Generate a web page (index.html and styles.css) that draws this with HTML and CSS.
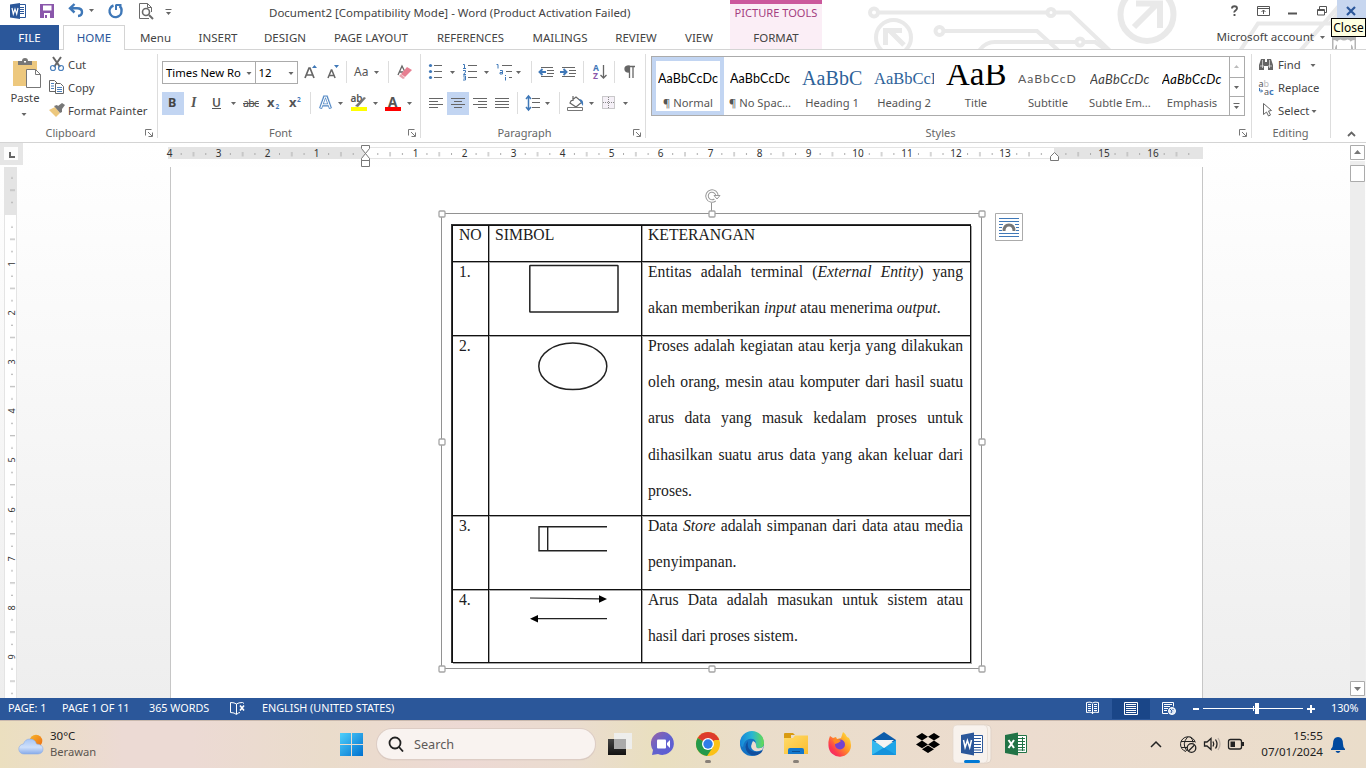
FILE: index.html
```html
<!DOCTYPE html>
<html lang="en">
<head>
<meta charset="utf-8">
<title>Document2 [Compatibility Mode] - Word</title>
<link rel="stylesheet" href="styles.css">
</head>
<body>
<svg class="defs" width="0" height="0">
  <defs>
    <path id="dd" d="M-2.500 -1h5L0 2z" fill="#666"/>
    <g id="launcher" fill="none" stroke="#777"><path d="M.5 6.500V.5H6.500"/><path d="M3 3l4 4M7.500 3.500v4h-4"/></g>
    <linearGradient id="win" x1="0" y1="0" x2="1" y2="1"><stop offset="0" stop-color="#4fd0fb"/><stop offset="1" stop-color="#0070cf"/></linearGradient>
    <linearGradient id="cloud" x1="0" y1="0" x2="0" y2="1"><stop offset="0" stop-color="#a7c6f6"/><stop offset=".55" stop-color="#cfe0fa"/><stop offset="1" stop-color="#86aaea"/></linearGradient>
    <linearGradient id="sun" x1="0" y1="0" x2="1" y2="1"><stop offset="0" stop-color="#f6b62c"/><stop offset="1" stop-color="#ee6a10"/></linearGradient>
    <linearGradient id="chat" x1="0" y1="0" x2="1" y2="1"><stop offset="0" stop-color="#9a62a5"/><stop offset=".5" stop-color="#6262cd"/><stop offset="1" stop-color="#5b5bd8"/></linearGradient>
    <linearGradient id="edge" x1="0" y1="0" x2="1" y2="0"><stop offset="0" stop-color="#1685d9"/><stop offset=".5" stop-color="#29b5d3"/><stop offset="1" stop-color="#65dc50"/></linearGradient>
    <linearGradient id="fold" x1="0" y1="0" x2="1" y2="1"><stop offset="0" stop-color="#ffdb6a"/><stop offset="1" stop-color="#fbbd2e"/></linearGradient>
    <linearGradient id="fox" x1="1" y1="0" x2="0" y2="1"><stop offset="0" stop-color="#fff13f"/><stop offset=".45" stop-color="#ff9226"/><stop offset=".75" stop-color="#fd3850"/><stop offset="1" stop-color="#e8207f"/></linearGradient>
    <linearGradient id="tv" x1="0" y1="0" x2="0" y2="1"><stop offset="0" stop-color="#444"/><stop offset="1" stop-color="#111"/></linearGradient>
    <pattern id="ticks" x="365.500" y="0" width="49.150" height="400" patternUnits="userSpaceOnUse"><path d="M12.300 153v2M36.900 153v2M24.600 152v4.500" stroke="#aaa"/></pattern>
    <pattern id="vticks" x="0" y="215" width="20" height="49.100" patternUnits="userSpaceOnUse"><path d="M11 12h2M11 36.500h2M10 24.300h5" stroke="#aaa"/></pattern>
  </defs>
</svg>
<div class="app">

  <header class="top">
    <svg class="circuit" viewBox="860 0 506 49" width="506" height="49" fill="none" stroke="#e9e9e9" stroke-width="4">
      <circle cx="874" cy="12.500" r="4"/><path d="M878 12.500h169M1055 12.500h15l46 44"/><circle cx="1051" cy="12.500" r="3.500"/>
      <circle cx="939.500" cy="31" r="4"/><path d="M944 31h93l22 20M979 51q6-9 16-9h80M1083 42h12l14 10"/><circle cx="1080" cy="42" r="3.500"/>
      <circle cx="893.500" cy="37.500" r="17.500"/><path d="M904 45l-15-15M885.500 45V30.500H902" stroke-width="5"/>
      <circle cx="1147" cy="14.500" r="26.500" stroke-width="6"/><path d="M1134 27l23-23M1136 3.500h24V28" stroke-width="6"/>
      <path d="M1240 51l18-27.500h72l14-18M1300 51l44-51"/>
    </svg>
    <div class="titlebar">
      <svg viewBox="0 0 32 25" width="32" height="25"><path d="M19 4.500h6.500v13H19" fill="#fff" stroke="#2b579a"/><path d="M20 7.500h4M20 9.500h4M20 11.500h4M20 13.500h4" stroke="#2b579a"/><path d="M10 4.500L20 3v16L10 17.500z" fill="#2b579a"/><path d="M12 8l1.300 6 1.700-5 1.700 5L18 8" fill="none" stroke="#fff" stroke-width="1.200"/></svg>
      <svg viewBox="32 0 32 25" width="32" height="25"><path d="M40 4h14v14H40z" fill="#8a57ab"/><path d="M43 5.500h8.500v5H43zM44 13h6v5h-6z" fill="#fff"/><path d="M45 15h2v3h-2z" fill="#8a57ab"/></svg>
      <svg viewBox="64 0 38 25" width="38" height="25"><path d="M74.500 4l-4.500 4.300 4.500 4.200M70.500 8.300h6.500q5 0 5 3.700t-4 4" fill="none" stroke="#3f78b8" stroke-width="2.400"/><use href="#dd" x="91.500" y="10"/></svg>
      <svg viewBox="102 0 30 25" width="30" height="25"><path d="M119.500 6q2.500 2 2 5a6 6 0 1 1-8-5.500" fill="none" stroke="#3f78b8" stroke-width="2.400"/><path d="M116 5v5M115.500 5h6" stroke="#3f78b8" stroke-width="2" fill="none"/></svg>
      <svg viewBox="132 0 28 25" width="28" height="25" fill="none" stroke="#6a6a6a"><path d="M149 18.500h-9.500V3.500h8l4 4V12M147.500 3.500v4h4"/><circle cx="146" cy="12" r="3.500" stroke-width="1.600"/><path d="M149 15l4 4" stroke-width="2"/></svg>
      <svg viewBox="160 0 20 25" width="20" height="25"><path d="M165.500 9.500h6" stroke="#666"/><use href="#dd" x="168.500" y="13"/></svg>
      <span class="doc-title">Document2 [Compatibility Mode] - Word (Product Activation Failed)</span>
      <span class="tools-title">PICTURE TOOLS</span>
      <svg class="winbtns" viewBox="1220 0 146 25" width="146" height="25" fill="none" stroke="#555"><path d="M1337 0h29v18h-29z" fill="#c7d6ef" stroke="none"/><path d="M1232 8.500q0-2.300 2.500-2.300t2.500 2.100q0 1.200-1.500 2.200t-1 2M1234.500 14v2" stroke-width="1.900"/><path d="M1257.500 6.500h12v9h-12zM1257.500 8.500h12M1263.500 14v-4M1261.500 12l2-2 2 2"/><path d="M1288 13.500h9" stroke-width="2"/><path d="M1319.500 9V6.500h7v6H1325M1317.500 9.500h7v5.500h-7zM1317.500 10.500h7"/><path d="M1347 7l8 8M1355 7l-8 8" stroke="#2b579a" stroke-width="2.200"/></svg>
    </div>
    <nav class="tabs">
      <a class="tab file">FILE</a><a class="tab home">HOME</a><a class="tab t-menu">Menu</a><a class="tab t-insert">INSERT</a><a class="tab t-design">DESIGN</a><a class="tab t-layout">PAGE LAYOUT</a><a class="tab t-ref">REFERENCES</a><a class="tab t-mail">MAILINGS</a><a class="tab t-review">REVIEW</a><a class="tab t-view">VIEW</a><a class="tab format">FORMAT</a>
      <span class="account">Microsoft account</span>
      <svg viewBox="1314 25 52 24" width="52" height="24"><use href="#dd" x="1322.500" y="37"/><path d="M1332 37h24v12h-24z" fill="#b4b4b4"/><path d="M1333.500 40q4 0 4.500 4-3 1-3 5h-1.500zM1354.500 40q-4 0-4.500 4 3 1 3 5h1.500z" fill="#fff"/><path d="M1337 49v-7q1-2.500 3.500-2.500 3.500 2 7 0 2.500 0 3.500 2.500v7z" fill="#fff"/></svg>
    </nav>
    <span class="tooltip">Close</span>
  </header>

  <section class="ribbon">
    <div class="group clipboard">
      <div class="clip-body">
        <div class="paste">
          <svg viewBox="0 54 48 36" width="48" height="36"><path d="M13 61h24v25H13z" fill="#edc87e"/><path d="M18 65v-4h4q0-3 3-3t3 3h4v4z" fill="#777"/><path d="M24 61h2v1.500h-2z" fill="#fff"/><path d="M26.500 69.500h9l5 5v13h-14z" fill="#fff" stroke="#777"/><path d="M35.500 69.500v5h5" fill="none" stroke="#777"/></svg>
          <span>Paste</span>
          <svg viewBox="-5 -3 10 6" width="10" height="6"><use href="#dd"/></svg>
        </div>
        <div class="clip-list">
          <div><svg viewBox="48 53 20 23" width="20" height="23" fill="none"><path d="M53 57l7 10M61 57l-7 10" stroke="#666" stroke-width="2"/><circle cx="53" cy="68" r="2.500" stroke="#4a80bd" stroke-width="1.200"/><circle cx="61" cy="68" r="2.500" stroke="#4a80bd" stroke-width="1.200"/></svg><span>Cut</span></div>
          <div><svg viewBox="48 76 20 23" width="20" height="23" fill="#fff" stroke="#666"><path d="M49.500 80.500h5l3 3v8h-8z"/><path d="M51 83.500h3M51 86h3M51 88.500h3" stroke="#4a80bd"/><path d="M55.500 83.500h5l3 3v7h-8z"/><path d="M57 87.500h5M57 89.500h5M57 91.500h5" stroke="#4a80bd"/></svg><span>Copy</span></div>
          <div><svg viewBox="48 99 20 23" width="20" height="23"><path d="M49 110l6-3 5 6-4 4z" fill="#edc87e"/><path d="M54 106l3-1 1 1 4-3 3 2-3 4 0 3-2 1z" fill="#777"/></svg><span>Format Painter</span></div>
        </div>
      </div>
      <div class="label"><span>Clipboard</span><svg viewBox="0 0 9 9" width="9" height="9"><use href="#launcher"/></svg></div>
    </div>

    <div class="group font">
      <div class="row">
        <span class="combo face">Times New Ro<svg viewBox="-5 -3 10 6" width="10" height="6"><use href="#dd"/></svg></span><span class="combo size">12<svg viewBox="-5 -3 10 6" width="10" height="6"><use href="#dd"/></svg></span>
        <svg viewBox="299 61 122 23" width="122" height="23"><g fill="none" stroke="#666" stroke-width="1.700"><path d="M306 78l4-10h1l4 10M307.500 75h6"/><path d="M329 78l3.300-8h.5l3.300 8M330.500 75.500h5" stroke-width="1.500"/></g><path d="M313 68h5l-2.500-3zM335 65h5l-2.500 3z" fill="#3f78b8"/><path d="M347.500 61v22M389.500 61v22" stroke="#ddd"/><text x="355" y="76" class="ui" fill="#555" font-size="12">Aa</text><use href="#dd" x="377.500" y="72"/><path d="M399 75l4-9 3 6M400 72h4" fill="none" stroke="#666" stroke-width="1.300"/><path d="M402 74l6-7 5 3-7 7z" fill="#e77f91"/><path d="M400 76l2-2 4 4-2 1z" fill="#e9a0ac"/></svg>
      </div>
      <div class="row">
        <svg viewBox="162 92 44 23" width="44" height="23"><path d="M162 92h22v23h-22z" fill="#c2d5f2"/><text x="168" y="107" class="ui" font-weight="700" font-size="12.500" fill="#444">B</text><text x="191" y="107" font-family="Liberation Serif" font-style="italic" font-weight="700" font-size="14" fill="#555">I</text></svg>
        <svg viewBox="206 92 32 23" width="32" height="23"><text x="212" y="107" class="ui" font-weight="600" font-size="12" fill="#555">U</text><path d="M212 108.500h9" stroke="#555"/><use href="#dd" x="233.500" y="103"/></svg>
        <svg viewBox="238 92 72 23" width="72" height="23"><text x="243" y="107" class="ui" font-size="10.500" textLength="16" fill="#444">abc</text><path d="M243 103.500h16" stroke="#555"/><text x="267" y="107" class="ui" font-weight="700" font-size="13" fill="#555">x</text><text x="275.500" y="109" class="ui" font-weight="700" font-size="6.500" fill="#3f78b8">2</text><text x="289" y="107" class="ui" font-weight="700" font-size="13" fill="#555">x</text><text x="297" y="101.500" class="ui" font-weight="700" font-size="6.500" fill="#3f78b8">2</text></svg>
        <svg viewBox="310 92 111 23" width="111" height="23"><path d="M310.500 92v22" stroke="#ddd"/><path d="M320.500 108.500l4-11.500h2l4 11.500M322.500 105h6" fill="none" stroke="#b7d0ee" stroke-width="3.600"/><path d="M320.500 108.500l4-11.500h2l4 11.500M322.500 105h6" fill="none" stroke="#4a80bd" stroke-width="2.600"/><path d="M320.800 108l4-11h1.400l4 11M322.500 104.800h6" fill="none" stroke="#fff" stroke-width="1.100"/><use href="#dd" x="340.500" y="103"/><text x="350.500" y="102" class="ui" font-weight="600" font-size="10" fill="#555">ab</text><path d="M355 106l9-9 2 1-8 9z" fill="#777"/><path d="M351 107h16v4h-16z" fill="#ff0"/><use href="#dd" x="375.500" y="103"/><text x="388" y="107" class="ui" font-weight="700" font-size="13.500" fill="#555">A</text><path d="M385 107h16v4h-16z" fill="#f00"/><use href="#dd" x="409.500" y="103"/></svg>
      </div>
      <div class="label"><span>Font</span><svg viewBox="0 0 9 9" width="9" height="9"><use href="#launcher"/></svg></div>
    </div>

    <div class="group paragraph">
      <div class="row">
        <svg viewBox="425 61 106 23" width="106" height="23"><path d="M434 65.500h8M434 71.500h8M434 77.500h8M468 65.500h9M468 71.500h9M468 77.500h9M502 65.500h10M506 71.500h6M509 77.500h3" stroke="#666"/><g fill="#3f78b8"><circle cx="430.500" cy="65.500" r="1.600"/><circle cx="430.500" cy="71.500" r="1.600"/><circle cx="430.500" cy="77.500" r="1.600"/></g><path d="M463 64.500h1.500v4M463 68.500h3M463 70.500h2.500v1.500l-2 2.500h2.500M463 76h2.500v4h-2.500M463.500 78h2M496.500 64.500h1.500v4M500 70.500h2.500v3.500h-2.500v-1.500h2M505.500 75v1M505.500 77v3.500" fill="none" stroke="#3f78b8"/><use href="#dd" x="452.500" y="72"/><use href="#dd" x="486.500" y="72"/><use href="#dd" x="518.500" y="72"/></svg>
        <svg viewBox="531 61 52 23" width="52" height="23" fill="none"><path d="M531.500 61v22" stroke="#ddd"/><path d="M541 67.500h12M547 70.500h7M547 73.500h7M541 76.500h12M562 67.500h13M569 70.500h7M569 73.500h7M562 76.500h13" stroke="#666"/><path d="M546 72h-6M542.500 69l-3 3 3 3M560 72h6M563.500 69l3 3-3 3" stroke="#3f78b8" stroke-width="1.900"/></svg>
        <svg viewBox="583 61 62 23" width="62" height="23"><path d="M583.500 61v22M614.500 61v22" stroke="#ddd"/><g class="ui" font-size="8.500" font-weight="700"><text x="593" y="71" fill="#3f78b8">A</text><text x="593" y="79" fill="#8a57ab">Z</text></g><path d="M603.500 65v13M600.500 75l3 3 3-3" fill="none" stroke="#666" stroke-width="1.300"/><path d="M629 66v6q-4 0-4-3t4-3zM629.500 66v12M633 66v12M629 66.500h6" fill="#666" stroke="#666" stroke-width="1.300"/></svg>
      </div>
      <div class="row">
        <svg viewBox="425 92 92 23" width="92" height="23"><path d="M447 92h22v23h-22z" fill="#c2d5f2"/><path d="M429 98.500h14M429 101.500h9M429 104.500h14M429 107.500h9M451 98.500h14M454 101.500h8M451 104.500h14M454 107.500h8M473 98.500h14M478 101.500h9M473 104.500h14M478 107.500h9M495 98.500h14M495 101.500h14M495 104.500h14M495 107.500h14" stroke="#666"/></svg>
        <svg viewBox="517 92 128 23" width="128" height="23"><path d="M517.500 92v22M559.500 92v22" stroke="#ddd"/><path d="M532 98.500h8M532 102.500h8M532 107.500h8" stroke="#666"/><path d="M528.500 97v12M526 99l2.500-3 2.500 3M526 107l2.500 3 2.500-3" fill="none" stroke="#3f78b8" stroke-width="1.500"/><use href="#dd" x="547.500" y="103"/><path d="M573 96v5M571 101l5-4 6 5-6 5-6-4z" fill="#fff" stroke="#666" stroke-width="1.200"/><path d="M579 99q5 0 4 7l-2-3z" fill="#3f78b8"/><path d="M567.500 107.500h15v3h-15z" fill="#fff" stroke="#777"/><use href="#dd" x="591.500" y="103"/><path d="M602.500 96.500h12v12h-12z" fill="#f5f0f7" stroke="#999" stroke-dasharray="1 1"/><path d="M608.500 97v12M603 102.500h12" stroke="#888" stroke-dasharray="1 1"/><use href="#dd" x="625.500" y="103"/></svg>
      </div>
      <div class="label"><span>Paragraph</span><svg viewBox="0 0 9 9" width="9" height="9"><use href="#launcher"/></svg></div>
    </div>

    <div class="group styles">
      <div class="gallery">
        <div class="style on"><b class="s-body">AaBbCcDc</b><i>¶ Normal</i></div>
        <div class="style"><b class="s-body">AaBbCcDc</b><i>¶ No Spac...</i></div>
        <div class="style"><b class="s-h1">AaBbC</b><i>Heading 1</i></div>
        <div class="style"><b class="s-h2">AaBbCcI</b><i>Heading 2</i></div>
        <div class="style"><b class="s-title">AaB</b><i>Title</i></div>
        <div class="style"><b class="s-sub">AaBbCcD</b><i>Subtitle</i></div>
        <div class="style"><b class="s-em">AaBbCcDc</b><i>Subtle Em...</i></div>
        <div class="style"><b class="s-em dark">AaBbCcDc</b><i>Emphasis</i></div>
        <svg viewBox="1228 57 16 58" width="16" height="58"><path d="M1229.500 56v60M1229 77.500h15M1229 96.500h15" stroke="#ababab"/><path d="M1234 68h5l-2.500-3z" fill="#bbb"/><use href="#dd" x="1236.500" y="87"/><path d="M1233.500 103.500h6" stroke="#666"/><use href="#dd" x="1236.500" y="107"/></svg>
      </div>
      <div class="label"><span>Styles</span><svg viewBox="0 0 9 9" width="9" height="9"><use href="#launcher"/></svg></div>
    </div>

    <div class="group editing">
      <div class="edit-list">
        <div><svg viewBox="1258 53 20 23" width="20" height="23"><path d="M1259 70v-5l2-6h4v3h2v-3h4l2 6v5h-5v-4h-4v4z" fill="#666"/><path d="M1262.500 60v8M1269.500 60v8M1260 66h4M1268 66h4" stroke="#fff" stroke-width=".6"/></svg><span class="e-find">Find</span><svg viewBox="-5 -3 10 6" width="10" height="6"><use href="#dd"/></svg></div>
        <div><svg viewBox="1258 76 20 23" width="20" height="23" class="ui" font-size="9"><text x="1258.500" y="87" fill="#555">a<tspan fill="#bbb">b</tspan></text><text x="1264" y="94.500" fill="#555">a<tspan fill="#3f78b8" font-weight="700">c</tspan></text><path d="M1259.500 88v3h3M1261 89.500l1.500 1.500-1.500 1.500" fill="none" stroke="#3f78b8"/></svg><span>Replace</span></div>
        <div><svg viewBox="1258 99 20 23" width="20" height="23"><path d="M1263.500 103.500v11l3-2.500 2 4 2-1-2-4 3-.500z" fill="#fff" stroke="#666"/></svg><span>Select</span><svg viewBox="-5 -3 10 6" width="10" height="6"><use href="#dd"/></svg></div>
      </div>
      <div class="label"><span>Editing</span></div>
    </div>
    <svg class="collapse" viewBox="1331 50 35 92" width="35" height="92"><path d="M1348 136l3.500-3.500 3.500 3.500" fill="none" stroke="#666" stroke-width="1.800"/></svg>
  </section>

  <main class="editor">
    <svg class="hruler" viewBox="0 143 1350 24" width="1350" height="24">
      <path d="M0 143h23v22H0z" fill="#e6e6e6"/><path d="M4 147h14v13H4z" fill="#fdfdfd"/><path d="M10 152v5h5" fill="none" stroke="#666" stroke-width="2"/>
      <path d="M168 147h1035v12H168z" fill="#e4e4e4"/><path d="M366 148h688v10H366z" fill="#fff"/><path d="M168 147h1035v12H168z" fill="url(#ticks)"/>
      <g class="num"><text x="169.500" y="157">4</text><text x="218.500" y="157">3</text><text x="267.500" y="157">2</text><text x="316.500" y="157">1</text><text x="415.500" y="157">1</text><text x="464.500" y="157">2</text><text x="513.500" y="157">3</text><text x="562.500" y="157">4</text><text x="611.500" y="157">5</text><text x="660.500" y="157">6</text><text x="710.500" y="157">7</text><text x="759.500" y="157">8</text><text x="808.500" y="157">9</text><text x="858" y="157">10</text><text x="907" y="157">11</text><text x="956" y="157">12</text><text x="1005" y="157">13</text><text x="1104" y="157">15</text><text x="1153" y="157">16</text></g>
      <g fill="#fff" stroke="#777"><path d="M361.500 145.500h8v3l-4 5-4-5zM365.500 153.500l4 5v2h-8v-2zM361.500 160.500h8v6h-8z"/><path d="M1050.500 160.500v-4l4-4 4 4v4z"/></g>
    </svg>
    <div class="workspace">
      <svg class="vruler" viewBox="0 167 170 531" width="170" height="531">
        <path d="M4 167h13v531H4z" fill="#e4e4e4"/><path d="M5 215h11v483H5z" fill="#fff"/><path d="M4 167h13v531H4z" fill="url(#vticks)"/>
        <g class="num"><text transform="translate(15 264) rotate(-90)">1</text><text transform="translate(15 313) rotate(-90)">2</text><text transform="translate(15 362) rotate(-90)">3</text><text transform="translate(15 411) rotate(-90)">4</text><text transform="translate(15 460) rotate(-90)">5</text><text transform="translate(15 510) rotate(-90)">6</text><text transform="translate(15 559) rotate(-90)">7</text><text transform="translate(15 608) rotate(-90)">8</text><text transform="translate(15 657) rotate(-90)">9</text></g>
      </svg>
      <div class="page">
        <div class="picture">
          <svg class="frame" viewBox="436 187 552 487" width="552" height="487" fill="none" stroke="#929292">
            <path d="M441.500 213.500h540v455h-540zM711.500 203v10"/>
            <g fill="#fff" stroke="#a5a5a5" stroke-width="1.300"><rect x="439" y="211" width="6" height="6" rx="1"/><rect x="709" y="211" width="6" height="6" rx="1"/><rect x="979" y="211" width="6" height="6" rx="1"/><rect x="439" y="439" width="6" height="6" rx="1"/><rect x="979" y="439" width="6" height="6" rx="1"/><rect x="439" y="666" width="6" height="6" rx="1"/><rect x="709" y="666" width="6" height="6" rx="1"/><rect x="979" y="666" width="6" height="6" rx="1"/></g>
            <path d="M717 196a5 5 0 1 0-2 4" stroke="#999" stroke-width="3.500"/><path d="M717 196a5 5 0 1 0-2 4" stroke="#fff" stroke-width="1.500"/><path d="M714 195.500h6l-3 3.500z" fill="#fff" stroke="#999"/>
          </svg>
          <div class="grid">
            <div class="cell">NO</div><div class="cell">SIMBOL</div><div class="cell">KETERANGAN</div>
            <div class="cell">1.</div><div class="cell fig"><svg viewBox="489 262 152 72" width="152" height="72"><rect x="529.800" y="265.500" width="88.200" height="46.500" rx=".5" fill="none" stroke="#222" stroke-width="1.500"/></svg></div>
            <div class="cell"><p class="j">Entitas adalah terminal (<em>External Entity</em>) yang</p><p>akan memberikan <em>input</em> atau menerima <em>output</em>.</p></div>
            <div class="cell">2.</div><div class="cell fig"><svg viewBox="489 336 152 72" width="152" height="72"><ellipse cx="572.800" cy="366.300" rx="34" ry="23.300" fill="none" stroke="#222" stroke-width="1.500"/></svg></div>
            <div class="cell"><p class="j">Proses adalah kegiatan atau kerja yang dilakukan</p><p class="j">oleh orang, mesin atau komputer dari hasil suatu</p><p class="j">arus data yang masuk kedalam proses untuk</p><p class="j">dihasilkan suatu arus data yang akan keluar dari</p><p>proses.</p></div>
            <div class="cell">3.</div><div class="cell fig"><svg viewBox="489 516 152 72" width="152" height="72"><path d="M607 526.700h-68v24h68M547.700 527v23.500" fill="none" stroke="#222" stroke-width="1.400"/></svg></div>
            <div class="cell"><p class="j">Data <em>Store</em> adalah simpanan dari data atau media</p><p>penyimpanan.</p></div>
            <div class="cell">4.</div><div class="cell fig"><svg viewBox="489 590 152 71" width="152" height="71"><path d="M530 598l70 .8M537 618.700h70" stroke="#222" stroke-width="1.200"/><path d="M599 595.300l8 3.700-8 3.700zM538 615l-8 3.700 8 3.700z"/></svg></div>
            <div class="cell"><p class="j">Arus Data adalah masukan untuk sistem atau</p><p>hasil dari proses sistem.</p></div>
          </div>
        </div>
        <svg class="layout-opts" viewBox="995 213 28 28" width="28" height="28"><path d="M995.500 213.500h27v27h-27z" fill="#fff" stroke="#ababab"/><path d="M999 218.500h20M999 221.500h20M999 224.500h4M1015 224.500h4M999 227.500h3M1016 227.500h3M999 230.500h3M1016 230.500h3M999 233.500h20M999 236.500h20" stroke="#3f78b8"/><path d="M1004 231q0-6 5-6t5 6" fill="none" stroke="#777" stroke-width="3"/></svg>
      </div>
    </div>
    <svg class="scroll" viewBox="1350 143 16 555" width="16" height="555"><path d="M1350 161h15v520h-15z" fill="#ededed"/><g fill="#fff" stroke="#ababab"><path d="M1350.500 145.500h14v14h-14zM1350.500 165.500h14v16h-14zM1350.500 681.500h14v14h-14z"/></g><path d="M1354 154h7l-3.500-4zM1354 687h7l-3.500 4z" fill="#777"/></svg>
  </main>

  <footer class="status">
    <span class="st1">PAGE: 1</span><span class="st2">PAGE 1 OF 11</span><span class="st3">365 WORDS</span>
    <svg viewBox="226 698 36 22" width="36" height="22" fill="none" stroke="#fff"><path d="M236.500 704v10M236.500 704q-2-1.500-6-1.500v10q4 0 6 2 2-2 3.500-2M236.500 704q2-1.500 6-1.500l1.500 1"/><path d="M240 705.500l4 5M244 705.500l-4 5" stroke-width="1.600"/></svg>
    <span class="st4">ENGLISH (UNITED STATES)</span>
    <svg class="views" viewBox="1080 698 242 22" width="242" height="22" fill="none" stroke="#fff"><path d="M1112 699h38v20h-38z" fill="#1a4688" stroke="none"/><path d="M1092.500 704v10M1086.500 702.500q4-1 6 .5 2-1.500 6-.5v10q-4-1-6 .500-2-1.500-6-.5zM1088 704.500h3M1088 706.500h3M1088 708.500h3M1088 710.500h3M1094 704.500h3M1094 706.500h3M1094 708.500h3M1094 710.500h3"/><path d="M1124.500 702.500h13v12h-13zM1126 704.500h10M1126 706.500h10M1126 708.500h10M1126 710.500h10M1126 712.500h10"/><path d="M1168 713.500h-5.500v-11h11v4M1164 704.500h8M1164 706.500h6M1164 708.500h4M1164 710.500h3"/><circle cx="1172" cy="711" r="3.500" fill="#dbe6f5"/><path d="M1170 709l2 2-1 2M1173 709v1" stroke="#2b579a"/><path d="M1193 709h6M1307 709h8M1311 705v8" stroke-width="2"/><path d="M1203 708.500h100M1253.500 706v5"/><path d="M1255 703h4v11h-4z" fill="#fff" stroke="none"/></svg>
    <span class="st5">130%</span>
  </footer>

  <footer class="taskbar">
    <svg viewBox="0 720 50 48" width="50" height="48"><circle cx="36" cy="741" r="6.300" fill="url(#sun)"/><path d="M24 754a5 5 0 0 1-.5-10q1.500-5 6.500-5 5 0 6.500 5 6.500.5 6.500 5t-5 5z" fill="url(#cloud)" stroke="#8fafe6" stroke-width=".6"/></svg>
    <div class="weather"><span>30°C</span><small>Berawan</small></div>
    <svg viewBox="330 720 47 48" width="47" height="48"><path d="M340 733h11v11h-11zM352 733h11v11h-11zM340 745h11v11h-11zM352 745h11v11h-11z" fill="url(#win)"/></svg>
    <div class="search"><svg viewBox="387 736 16 16" width="16" height="16" fill="none" stroke="#222" stroke-width="1.800"><circle cx="394" cy="743" r="5.500"/><path d="M398 747l4 4.500"/></svg>Search</div>
    <svg viewBox="600 720 42 48" width="42" height="48"><path d="M608 739h18v16h-18z" fill="url(#tv)"/><path d="M614 733h18v16h-18z" fill="#eee" opacity=".95"/><path d="M614 739h12v10h-12z" fill="#aaa"/></svg>
    <svg viewBox="642 720 44 48" width="44" height="48"><path d="M652 755l1-5a11.500 11.500 0 1 1 5 4z" fill="url(#chat)"/><rect x="657" y="739.500" width="9" height="9" rx="1" fill="#fff"/><path d="M667 743l3-3v8l-3-3z" fill="#fff"/></svg>
    <svg viewBox="686 720 44 48" width="44" height="48"><circle cx="708" cy="744" r="12" fill="#fbc116"/><path d="M708 744L697.600 738A12 12 0 0 1 718.400 738z" fill="#dd3b2d"/><path d="M697.600 738A12 12 0 0 0 707 756l6-9-5-3z" fill="#249a4b"/><path d="M708 738h10.400l.8 2H708z" fill="#dd3b2d"/><circle cx="708" cy="744" r="6" fill="#fff"/><circle cx="708" cy="744" r="4.700" fill="#2f7de9"/><rect x="705" y="760" width="6" height="3" rx="1.500" fill="#888078"/></svg>
    <svg viewBox="730 720 44 48" width="44" height="48"><circle cx="752" cy="744" r="12" fill="#1473c4"/><path d="M740 743a12 12 0 0 1 24 0q0 6-7 5-3-1-1-4 0-6-7-5-5 1-6 8-3-1-3-4z" fill="url(#edge)"/><path d="M748 741q-2 10 8 11 4 0 7-2l-2 3q-7 5-13 0-5-6 0-12z" fill="#104e9e"/><path d="M753 741q3 1 3 4t1 3q4 1 7-2l-2 4q-7 3-10-1-2-3 1-8z" fill="#ecdccf"/></svg>
    <svg viewBox="774 720 44 48" width="44" height="48"><path d="M784 734q0-1 1-1h8l2 2h-4v4h-7z" fill="#d99b12"/><path d="M784 738h9l2-2.500h13v18.500h-24z" fill="url(#fold)"/><path d="M788 754v-4q0-2 2-2h12q2 0 2 2v4z" fill="#1277cc"/><path d="M792 751.500h8" stroke="#0a4f94"/><rect x="793" y="760" width="6" height="3" rx="1.500" fill="#888078"/></svg>
    <svg viewBox="818 720 44 48" width="44" height="48"><path d="M829 739l1-3 3 2 3-1 1 2 4-1 2-6q3 2 4 5l2 1q2 3 2 7a11 11 0 0 1-22.500 1q-.5-4 .5-7z" fill="url(#fox)"/><circle cx="840" cy="744.500" r="5" fill="#7542cf"/><path d="M833 740l5-1 3 2-3 2-3 1z" fill="#ff8b21"/></svg>
    <svg viewBox="862 720 44 48" width="44" height="48"><path d="M872 740l12-8 12 8v2h-24z" fill="#0b5cab"/><path d="M872 740l12 8 12-8v15h-24z" fill="#1ca4e8"/><path d="M872 740l12 8-4 3-8 4z" fill="#35b9ef"/><path d="M884 747.500l12 7.500h-24z" fill="#1492dc"/><path d="M874 740h20l-10 8z" fill="#f4f4f4"/></svg>
    <svg viewBox="906 720 44 48" width="44" height="48"><path d="M922 733l6 3.800-6 3.800-6-3.800zM934 733l6 3.800-6 3.800-6-3.800zM922 740.600l6 3.800-6 3.800-6-3.800zM934 740.600l6 3.800-6 3.800-6-3.800zM928 745.500l6 3.800-6 3.800-6-3.800z"/></svg>
    <svg viewBox="950 720 44 48" width="44" height="48"><rect x="957" y="725" width="34" height="38" rx="4" fill="#f7f0e9" stroke="#dfd2c7"/><rect x="953" y="725" width="34.500" height="38" rx="4" fill="#f8f2ed" stroke="#e2d7cd" stroke-width=".7"/><path d="M973 735.500h9.500v17H973" fill="#fff" stroke="#2b579a"/><path d="M974 738.500h7M974 741.500h7M974 744.500h7M974 747.500h7M974 750h7" stroke="#2b579a"/><path d="M961 735l13-2.500v23L961 753z" fill="#2b579a"/><path d="M963.500 740l1.600 7.500 2.300-7 2.300 7L971.500 740" fill="none" stroke="#fff" stroke-width="1.500"/><rect x="964" y="760" width="16" height="3" rx="1.500" fill="#0078d4"/></svg>
    <svg viewBox="994 720 44 48" width="44" height="48"><path d="M1017 735.500h9.500v17h-9.500" fill="#fff" stroke="#217346"/><path d="M1018 738.500h7M1018 741.500h7M1018 744.500h7M1018 747.500h7M1018 750h7M1022.500 737v14" stroke="#217346"/><path d="M1005 735l13-2.500v23l-13-2.500z" fill="#217346"/><path d="M1008.500 740l5.500 8M1014 740l-5.500 8" stroke="#fff" stroke-width="2"/></svg>
    <svg class="tray" viewBox="1140 720 112 48" width="112" height="48" fill="none" stroke="#222" stroke-width="1.300"><path d="M1151 747l5-5 5 5" stroke-width="1.500"/><path d="M1186 751.500a7.500 7.500 0 1 1 9.300-9M1187 751q-6-7 1-14.500M1190 736.500q3 3 3 6M1181 741.500h14M1181 747.500h6" stroke-width="1"/><circle cx="1191.500" cy="748" r="4.300"/><path d="M1188.500 751l6-6"/><path d="M1204.500 742h2.500l4-3.500v11l-4-3.500h-2.500z"/><path d="M1213 741.500q1.500 2.500 0 5M1215.500 739.500q3 4.500 0 9"/><path d="M1218 738q4 6 0 12" stroke="#b9aea4"/><rect x="1228.500" y="739.500" width="13" height="9.500" rx="2"/><path d="M1230.500 741.500h4.500v5.500h-4.500z" fill="#222" stroke="none"/><path d="M1243 742v4" stroke-width="2"/></svg>
    <div class="clock"><span>15:55</span><span>07/01/2024</span></div>
    <svg viewBox="1323 720 43 48" width="43" height="48"><path d="M1331 749q2-1.500 2-5 0-7 5-7t5 7q0 3.500 2 5v1h-14zM1335.500 751h5q-1 2-2.500 2t-2.500-2z" fill="#00499e"/></svg>
  </footer>
</div>
</body>
</html>
```
FILE: styles.css
```css
* { box-sizing: border-box; }
body { margin: 0; overflow: hidden; font: 12px/16px "Noto Sans", "Open Sans", sans-serif; color: #444; }
svg { display: block; flex: none; }
.defs { position: absolute; }
.ui { font-family: "Noto Sans", sans-serif; }
.app { width: 1366px; height: 768px; display: flex; flex-direction: column; background: #fff; }

.top { position: relative; height: 50px; border-bottom: 1px solid #d4d4d4; }
.circuit { position: absolute; right: 0; top: 0; }
.titlebar { position: relative; display: flex; height: 25px; }
.doc-title { width: 461px; margin-left: 89px; padding-top: 5px; font-size: 11.5px; white-space: nowrap; }
.tools-title { width: 92px; border-top: 4px solid #cb589c; background: #fbeef6; color: #a43d7e; font-size: 11.1px; line-height: 17px; text-align: center; white-space: nowrap; }
.winbtns { margin-left: auto; }
.tabs { position: relative; display: flex; height: 25px; }
.tab { font-size: 11.5px; line-height: 25px; text-align: center; white-space: nowrap; flex: none; }
.file { width: 59px; background: #2b579a; color: #fff; }
.home { width: 62px; margin-left: 4px; height: 25px; border: 1px solid #d4d4d4; border-bottom: 0; background: #fff; color: #2b579a; line-height: 23px; }
.t-menu { width: 61px; }
.t-insert { width: 64px; }
.t-design { width: 70px; }
.t-layout { width: 102px; }
.t-ref { width: 97px; font-size: 11.3px; }
.t-mail { width: 82px; }
.t-review { width: 70px; }
.t-view { width: 56px; margin-right: 3px; }
.format { width: 92px; height: 24px; background: #fbeef6; }
.account { margin-left: auto; font-size: 11.6px; line-height: 24px; white-space: nowrap; }
.tooltip { position: absolute; left: 1331px; top: 18px; width: 35px; height: 19px; border: 1px solid #000; background: #ffffe1; color: #000; font-size: 12px; line-height: 18px; text-align: center; }

.ribbon { display: flex; height: 93px; border-bottom: 1px solid #d4d4d4; background: #fff; }
.group { display: flex; flex-direction: column; height: 84px; margin-top: 4px; border-right: 1px solid #ddd; }
.label { display: flex; margin: auto 0 -3px; height: 16px; align-items: center; justify-content: center; font-size: 11px; color: #666; line-height: 8px; }
.label span { flex: 1; text-align: center; padding-right: 21px; }
.label svg { margin: 1px 3px 0 -12px; }
.clipboard { width: 158px; }
.clipboard .label span { padding-right: 16px; }
.clip-body { display: flex; }
.paste { display: flex; flex-direction: column; align-items: center; width: 48px; font-size: 11.3px; }
.paste span { line-height: 15px; margin: 0 0 6px 2px; }
.clip-list, .edit-list { margin-top: -1px; }
.clip-list div, .edit-list div { display: flex; height: 23px; align-items: center; font-size: 11.3px; line-height: 20px; white-space: nowrap; }
.font { width: 263px; padding-left: 4px; }
.row { display: flex; height: 23px; margin-top: 8px; }
.group .row:first-child { margin-top: 7px; }
.combo { display: flex; align-items: center; justify-content: space-between; height: 23px; border: 1px solid #ababab; padding-left: 3px; font-size: 11.3px; color: #000; white-space: nowrap; }
.combo svg { margin-right: 1px; }
.face { width: 95px; }
.size { width: 43px; margin-left: -1px; }
.combo.size { width: 44px; }
.combo + svg { margin-left: -1px; }
.combo.size + svg { margin-left: 0; }
.paragraph { width: 225px; padding-left: 4px; }
.styles { width: 606px; padding-left: 5px; }
.gallery { display: flex; width: 594px; height: 60px; margin-top: 2px; border: 1px solid #ababab; }
.style { display: flex; flex-direction: column; align-items: center; width: 72px; height: 58px; flex: none; padding-top: 8px; }
.style.on { box-shadow: inset 0 0 0 4px #c2d5f2; }
.style b { display: block; width: 60px; height: 22px; overflow: hidden; font-weight: 400; line-height: 27px; white-space: nowrap; }
.style i { font-style: normal; font-size: 11.2px; line-height: 16px; margin-top: 8px; color: #555; white-space: nowrap; }
.style .s-body { font-family: "Lato", sans-serif; font-size: 12.5px; line-height: 28px; color: #000; letter-spacing: .15px; }
.style .s-h1 { font-family: "Liberation Serif", serif; font-size: 20px; color: #2e6299; letter-spacing: .1px; }
.style .s-h2 { font-family: "Liberation Serif", serif; font-size: 16.5px; line-height: 28px; color: #2e6299; }
.style .s-title { font-family: "Liberation Serif", serif; font-size: 33px; line-height: 18px; color: #000; }
.style .s-sub { font-family: "Lato", sans-serif; font-size: 12.2px; line-height: 28px; color: #5a5a5a; letter-spacing: 1px; }
.style .s-em { font-family: "Lato", sans-serif; font-size: 12.8px; line-height: 28px; font-style: italic; color: #404040; letter-spacing: .35px; }
.style .dark { color: #000; }
.editing { width: 79px; padding-left: 6px; }
.editing .label span { padding-right: 7px; }
.edit-list .e-find { margin-right: 7px; }
.collapse { margin-left: auto; }

.editor { display: grid; grid-template-columns: 1350px 16px; grid-template-rows: 24px 531px; background: linear-gradient(#fff, #eee); }
.scroll { grid-column: 2; grid-row: 1 / 3; }
.num text { font: 10px "Noto Sans", sans-serif; text-anchor: middle; fill: #333; }
.vruler .num text { font-size: 9px; }
.workspace { display: flex; grid-row: 2; }
.page { display: flex; align-items: flex-start; width: 1033px; height: 531px; background: #fff; border: 1px solid #c6c6c6; border-width: 0 1px; }
.picture { position: relative; width: 552px; height: 487px; margin: 20px 0 0 265px; padding: 37px 0 0 15px; }
.frame { position: absolute; left: 0; top: 0; }
.layout-opts { margin: 46px 0 0 7px; }
.grid { display: grid; grid-template-columns: 37px 153px 329px; grid-template-rows: 37px 74px 180px 74px 73px; width: 520px; box-shadow: inset 0 0 0 1px #111; border: solid #333; border-width: 1px 0 0 1px; color: #1c1c22; font: 15.7px/36.4px "Liberation Serif", serif; }
.cell { box-shadow: inset -1px -1px 0 #111, 1px 1px 0 rgba(0, 0, 0, .35); padding: 0 7px 0 6px; white-space: nowrap; }
.cell:nth-child(3n+1) { padding-left: 7px; }
.cell:nth-child(3n) { padding-right: 8px; }
.cell::before { content: ""; display: block; margin-top: -8.5px; }
.cell.fig::before { display: none; }
.cell.fig { padding: 0; }
.cell p { margin: 0; }
.cell .j { text-align: justify; text-align-last: justify; white-space: normal; }

.status { display: flex; height: 22px; background: #2b579a; color: #fff; font-size: 10.8px; line-height: 20px; white-space: nowrap; }
.st1 { width: 54px; margin-left: 8px; }
.st2 { width: 87px; }
.st3 { width: 77px; }
.views { margin-left: auto; }
.st5 { width: 44px; padding-left: 9px; }

.taskbar { display: flex; height: 48px; border-top: 1px solid #c9b9ae; background: linear-gradient(90deg, #ebdfbf, #ecdad4 9%, #ecdad4 14%, #eadccb 24%, #edd9d4 34%, #eadccf 42%, #e9dfbf 48%, #eaddca 55%, #ecdccf 75%, #eaddca); }
.taskbar > svg { margin-top: -1px; }
.weather { display: flex; flex-direction: column; width: 280px; padding-top: 7px; font-size: 11.5px; color: #222; line-height: 16px; }
.weather small { font-size: 11.2px; color: #5c5650; }
.search { display: flex; align-items: center; gap: 10px; width: 218px; height: 30px; margin: 8px 5px 0 0; padding-left: 11px; border-radius: 15px; background: #f9f3f0; box-shadow: 0 0 0 1px #ddcdc5, 0 1px 1px #bbaaa0; font-size: 12.7px; color: #5e5a58; }
.taskbar > .tray { margin-left: auto; }
.clock { display: flex; flex-direction: column; align-items: flex-end; width: 71px; padding-top: 7px; font-size: 11.6px; line-height: 16px; color: #222; white-space: nowrap; }
```
